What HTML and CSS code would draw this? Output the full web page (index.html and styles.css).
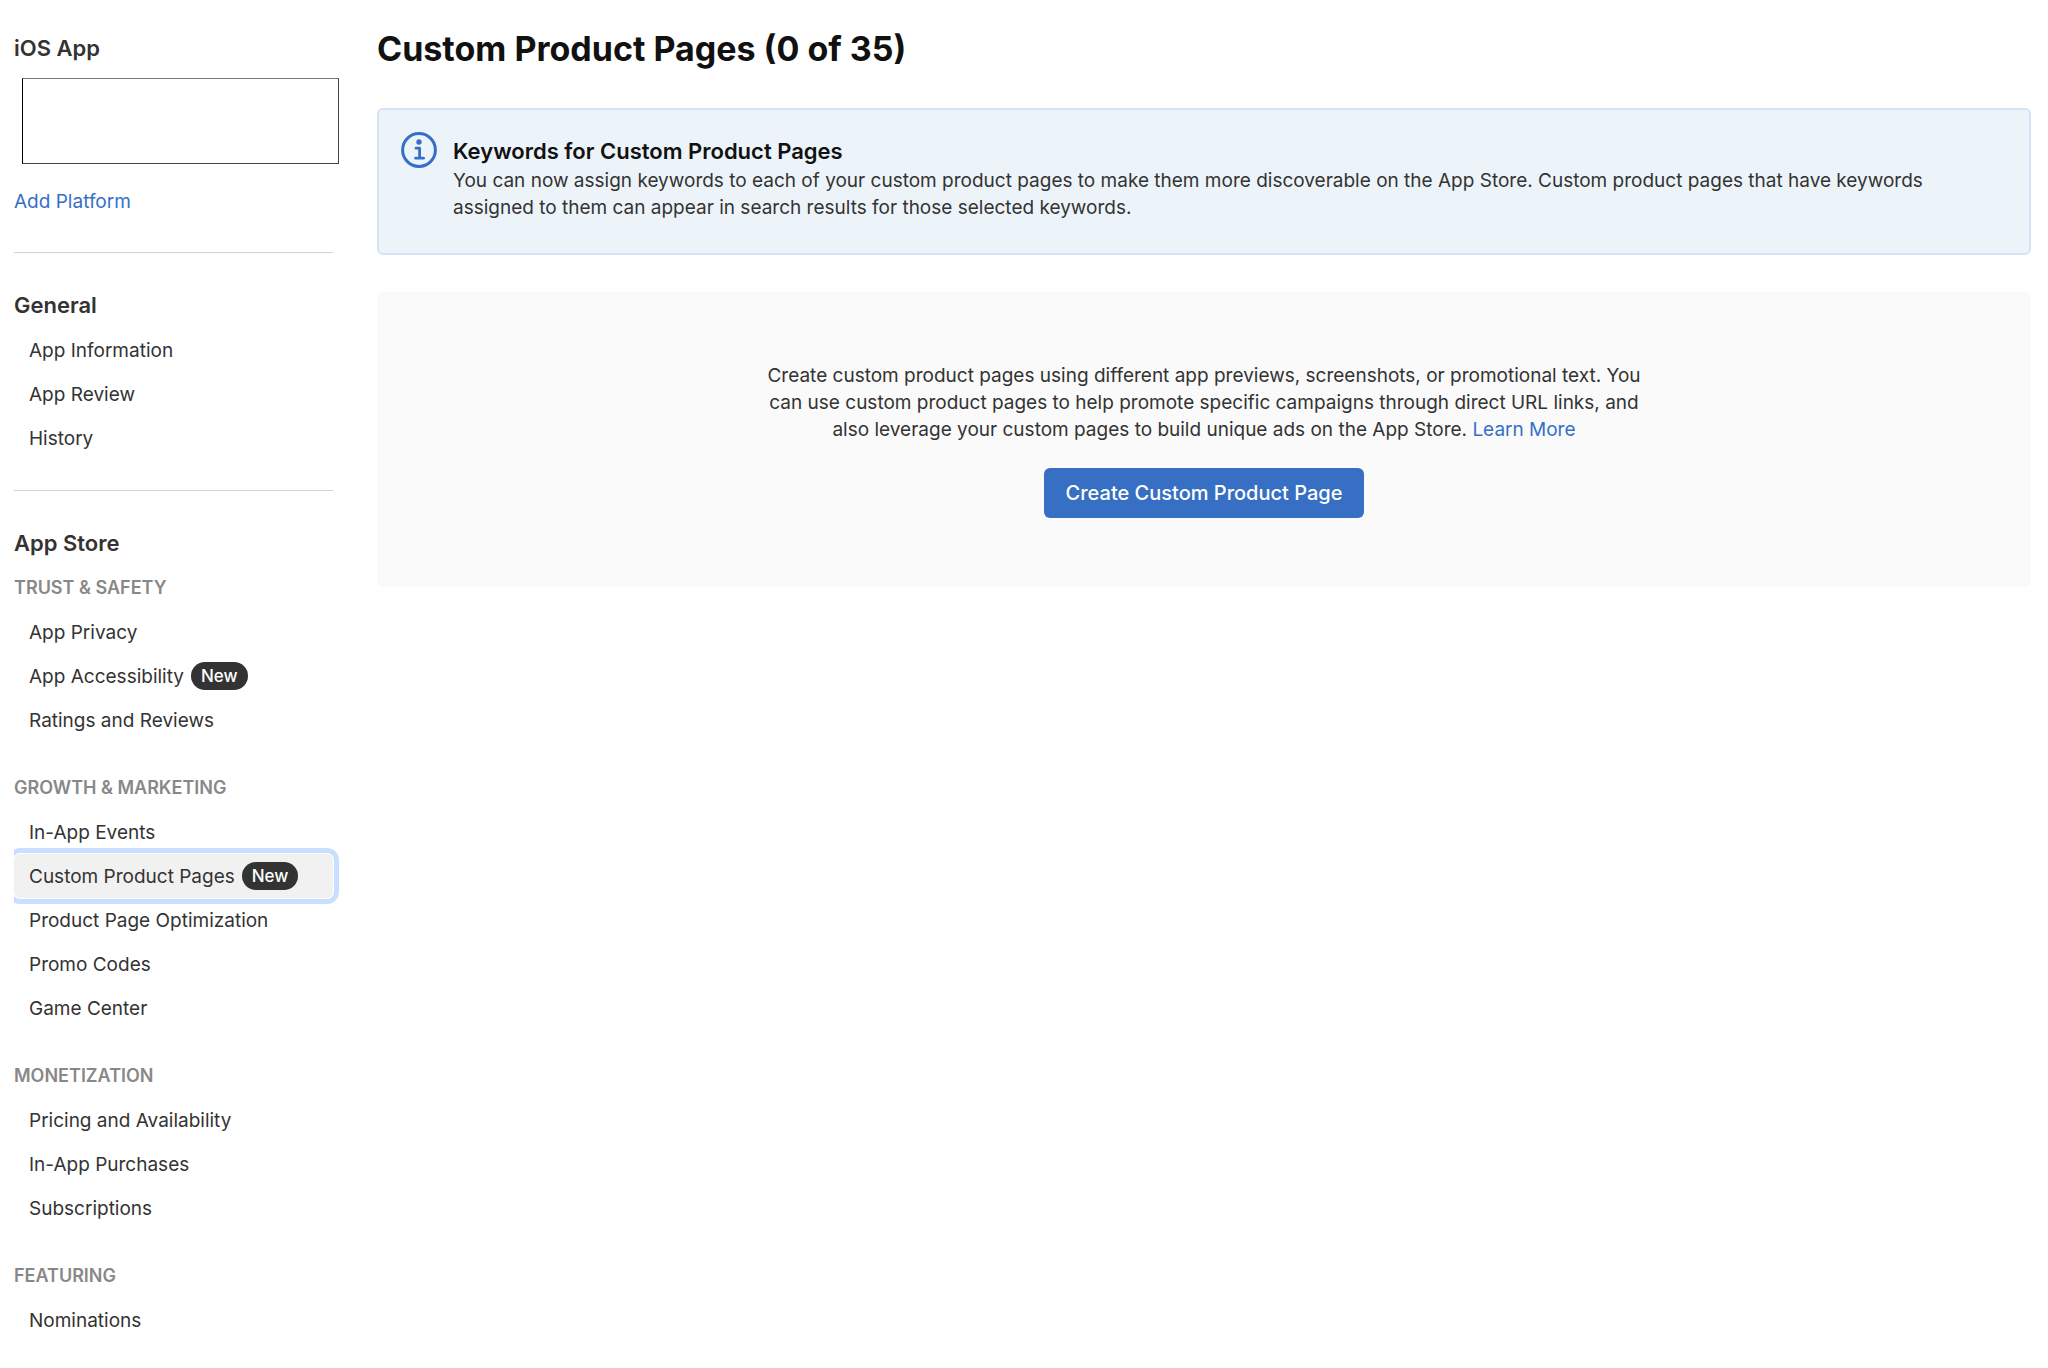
FILE: index.html
```html
<!DOCTYPE html>
<html lang="en">
  <head>
    <meta charset="UTF-8" />
    <meta name="viewport" content="width=device-width, initial-scale=1.0" />
    <title>Custom Product Pages</title>
    <link rel="stylesheet" href="styles.css">
  </head>
  <body>
    <div class="layout">
      <aside class="sidebar">
        <section class="platform">
          <h2>iOS App</h2>
          <div class="version-box"></div>
          <a class="add-platform" href="#">Add Platform</a>
        </section>
        <nav>
          <section class="nav-section">
            <h2>General</h2>
            <ul>
              <li><a href="#">App Information</a></li>
              <li><a href="#">App Review</a></li>
              <li><a href="#">History</a></li>
            </ul>
          </section>
          <section class="nav-section">
            <h2>App Store</h2>
            <h3>Trust &amp; Safety</h3>
            <ul>
              <li><a href="#">App Privacy</a></li>
              <li><a href="#">App Accessibility <span class="badge">New</span></a></li>
              <li><a href="#">Ratings and Reviews</a></li>
            </ul>
            <h3>Growth &amp; Marketing</h3>
            <ul>
              <li><a href="#">In-App Events</a></li>
              <li><a class="active" href="#" aria-current="page">Custom Product Pages <span class="badge">New</span></a></li>
              <li><a href="#">Product Page Optimization</a></li>
              <li><a href="#">Promo Codes</a></li>
              <li><a href="#">Game Center</a></li>
            </ul>
            <h3>Monetization</h3>
            <ul>
              <li><a href="#">Pricing and Availability</a></li>
              <li><a href="#">In-App Purchases</a></li>
              <li><a href="#">Subscriptions</a></li>
            </ul>
            <h3>Featuring</h3>
            <ul>
              <li><a href="#">Nominations</a></li>
            </ul>
          </section>
        </nav>
      </aside>
      <main>
        <h1>Custom Product Pages (0 of 35)</h1>
        <div class="notice">
          <svg class="info-icon" viewBox="0 0 36 36" width="36" height="36" fill="none" stroke="#366fc8" stroke-width="3" aria-hidden="true">
            <circle cx="18" cy="18" r="16.4" />
            <circle cx="18" cy="10" r="2.7" fill="#366fc8" stroke="none" />
            <path d="M15 16.2h3.6v9.4M14.6 26.2h8" stroke-width="2.8" stroke-linecap="round" stroke-linejoin="round" />
          </svg>
          <div class="notice-text">
            <h2>Keywords for Custom Product Pages</h2>
            <p>
              You can now assign keywords to each of your custom product pages to
              make them more discoverable on the App Store. Custom product pages
              that have keywords assigned to them can appear in search results
              for those selected keywords.
            </p>
          </div>
        </div>
        <div class="empty">
          <p>
            Create custom product pages using different app previews,
            screenshots, or promotional text. You can use custom product pages
            to help promote specific campaigns through direct URL links, and
            also leverage your custom pages to build unique ads on the App
            Store. <a href="#">Learn More</a>
          </p>
          <button type="button">Create Custom Product Page</button>
        </div>
      </main>
    </div>
  </body>
</html>
```
FILE: styles.css
```css
* {
  box-sizing: border-box;
}
body {
  margin: 0;
  background-color: #fff;
  color: #333;
  font-family: Inter, "Liberation Sans", sans-serif;
  font-size: 19px;
  line-height: 27px;
}
h1,
h2,
h3,
p,
ul {
  margin: 0;
  padding: 0;
}
a {
  color: #366fc8;
  text-decoration: none;
}
.layout {
  display: flex;
  gap: 44px;
  padding: 27px 17px 26px 14px;
}
.sidebar {
  flex: none;
  width: 319px;
}
.sidebar h2 {
  margin-bottom: 2px;
  font-size: 22px;
  font-weight: 600;
  line-height: 42px;
}
.version-box {
  width: 317px;
  height: 86px;
  margin: 9px 0 24px 8px;
  border: 1px solid #444;
  border-top-color: #777;
  border-left-color: #000;
}
.add-platform {
  display: block;
}
.nav-section {
  margin-top: 30px;
  padding-top: 31px;
  border-top: 1px solid #d2d2d2;
}
.platform + nav .nav-section:first-child {
  margin-top: 37px;
}
.nav-section ul {
  list-style: none;
}
.nav-section li a {
  display: flex;
  align-items: center;
  gap: 7px;
  height: 44px;
  padding: 0 15px;
  color: #333;
}
.nav-section li a.active {
  background-color: #f1f1f1;
  border-radius: 6px;
  box-shadow: 0 0 0 1px #fff, 0 0 0 6px #c8dfff;
  /* the ring is cut off at the sidebar's left edge */
  clip-path: inset(-6px -6px -6px 0);
}
.nav-section h3 {
  color: #888;
  font-size: 18px;
  font-weight: 600;
  line-height: 44px;
  text-transform: uppercase;
}
.nav-section ul + h3 {
  margin-top: 24px;
}
.badge {
  padding: 0 10px;
  border-radius: 14px;
  background-color: #333;
  color: #fff;
  font-size: 17px;
  font-weight: 500;
  line-height: 28px;
}
main {
  flex: 1;
  min-width: 0;
}
h1 {
  color: #111;
  font-size: 34px;
  font-weight: 700;
  line-height: 44px;
}
.notice {
  display: flex;
  gap: 16px;
  margin-top: 37px;
  padding: 22px 100px 32px 22px;
  border: 2px solid #d2e4f5;
  border-radius: 6px;
  background-color: #ecf4fa;
}
.info-icon {
  flex: none;
}
.notice h2 {
  margin: 4px 0 1px;
  color: #111;
  font-size: 22px;
  font-weight: 600;
  line-height: 30px;
}
.empty {
  display: flex;
  flex-direction: column;
  align-items: center;
  margin-top: 37px;
  padding: 70px 20px 69px;
  border-radius: 6px;
  background-color: #fafafa;
  text-align: center;
}
.empty p {
  max-width: 890px;
}
.empty button {
  height: 50px;
  margin-top: 25px;
  padding: 0 22px;
  border: none;
  border-radius: 6px;
  background-color: #366fc4;
  color: #fff;
  font-family: inherit;
  font-size: 20px;
  font-weight: 500;
  cursor: pointer;
}
```
